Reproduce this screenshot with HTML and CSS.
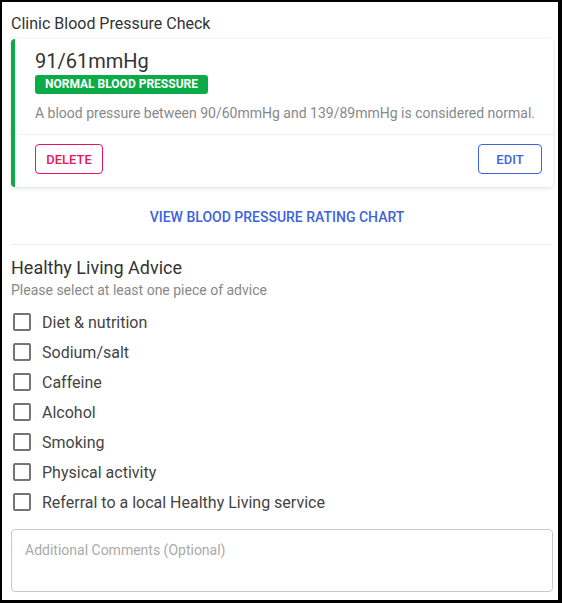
FILE: index.html
```html
<!DOCTYPE html>
<html lang="en">

<head>
  <meta charset="UTF-8">
  <meta name="viewport" content="width=device-width, initial-scale=1.0">
  <title>Clinic Blood Pressure Check</title>
  <link rel="stylesheet" href="styles.css">
</head>

<body>
  <div class="frame">
    <h2 class="section-title">Clinic Blood Pressure Check</h2>

    <div class="reading-card">
      <div class="reading-body">
        <div class="reading-value">91/61mmHg</div>
        <span class="badge">NORMAL BLOOD PRESSURE</span>
        <p class="reading-note">A blood pressure between 90/60mmHg and 139/89mmHg is considered normal.</p>
      </div>
      <div class="reading-actions">
        <button class="btn btn-delete">DELETE</button>
        <button class="btn btn-edit">EDIT</button>
      </div>
    </div>

    <div class="chart-link-row">
      <a class="chart-link" href="#">VIEW BLOOD PRESSURE RATING CHART</a>
    </div>

    <h3 class="advice-title">Healthy Living Advice</h3>
    <p class="advice-hint">Please select at least one piece of advice</p>

    <ul class="advice-list">
      <li><label><span class="box"></span>Diet &amp; nutrition</label></li>
      <li><label><span class="box"></span>Sodium/salt</label></li>
      <li><label><span class="box"></span>Caffeine</label></li>
      <li><label><span class="box"></span>Alcohol</label></li>
      <li><label><span class="box"></span>Smoking</label></li>
      <li><label><span class="box"></span>Physical activity</label></li>
      <li><label><span class="box"></span>Referral to a local Healthy Living service</label></li>
    </ul>

    <textarea class="comments" placeholder="Additional Comments (Optional)"></textarea>
  </div>
</body>

</html>
```

FILE: styles.css
```css
:root {
  --green: #0bab47;
  --blue: #3d63dd;
  --red: #e8175d;
  --text: #333;
  --muted: #888;
}

html, body {
  margin: 0;
  padding: 0;
  background: #000;
}

body {
  font-family: Roboto, "Liberation Sans", Arial, sans-serif;
  color: var(--text);
}

.frame {
  box-sizing: border-box;
  width: 556px;
  height: 598px;
  margin: 2px 0 0 2px;
  padding: 12px 5px 0 9px;
  background: #fff;
  overflow: hidden;
}

.section-title {
  margin: 0;
  font-size: 16px;
  font-weight: 400;
  line-height: 20px;
}

.reading-card {
  margin-top: 5px;
  border-left: 4px solid var(--green);
  border-radius: 4px;
  box-shadow: 0 1px 4px rgba(60, 70, 110, 0.18);
  background: #fff;
}

.reading-body {
  padding: 10px 16px 12px 20px;
  border-bottom: 1px solid #eef0f3;
}

.reading-value {
  font-size: 20px;
  line-height: 24px;
}

.badge {
  display: inline-block;
  margin-top: 1px;
  padding: 0 10px;
  background: var(--green);
  color: #fff;
  font-size: 12px;
  font-weight: 700;
  line-height: 19px;
  border-radius: 3px;
}

.reading-note {
  margin: 10px 0 0;
  font-size: 14px;
  line-height: 18px;
  color: var(--muted);
}

.reading-actions {
  display: flex;
  justify-content: space-between;
  padding: 9px 11px 13px 20px;
}

.btn {
  height: 30px;
  padding: 0 10px;
  background: #fff;
  border: 1px solid;
  border-radius: 4px;
  font-family: inherit;
  font-size: 13px;
  font-weight: 500;
}

.btn-delete {
  width: 68px;
  color: var(--red);
  border-color: var(--red);
}

.btn-edit {
  width: 64px;
  color: var(--blue);
  border-color: var(--blue);
}

.chart-link-row {
  text-align: center;
  padding: 20px 10px 18px 0;
  border-bottom: 1px solid #eef0f3;
}

.chart-link {
  color: var(--blue);
  font-size: 14px;
  font-weight: 500;
  text-decoration: none;
}

.advice-title {
  margin: 12px 0 0;
  font-size: 18px;
  font-weight: 400;
  line-height: 22px;
}

.advice-hint {
  margin: 2px 0 0;
  font-size: 14px;
  line-height: 18px;
  color: var(--muted);
}

.advice-list {
  list-style: none;
  margin: 8px 0 0;
  padding: 0;
}

.advice-list li {
  height: 30px;
}

.advice-list label {
  display: flex;
  align-items: center;
  height: 30px;
  font-size: 16px;
  color: #444;
}

.box {
  box-sizing: border-box;
  width: 18px;
  height: 18px;
  margin: 0 11px 0 2px;
  border: 2px solid #757575;
  border-radius: 2px;
}

.comments {
  display: block;
  box-sizing: border-box;
  width: 100%;
  height: 63px;
  margin-top: 12px;
  padding: 12px 13px;
  border: 1px solid #c8c8c8;
  border-radius: 4px;
  font-family: inherit;
  font-size: 14px;
  resize: none;
}

.comments::placeholder {
  color: #aaa;
}
```
